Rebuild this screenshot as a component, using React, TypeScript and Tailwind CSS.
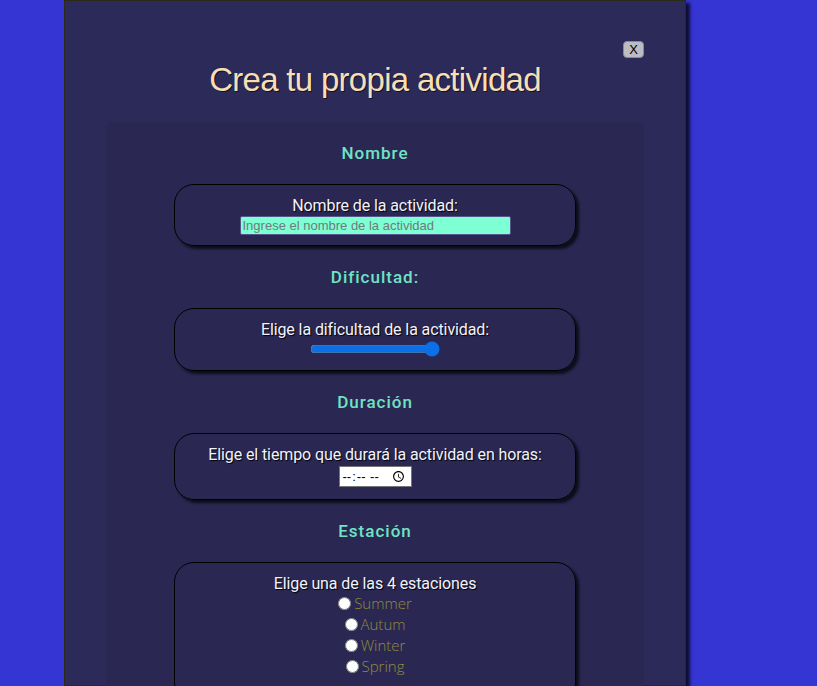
import React from "react";

export default function App() {
  const seasons = ["Summer", "Autum", "Winter", "Spring"];

  return (
    <div className="min-h-[686px] w-full bg-[#3535d3] overflow-hidden">
      <div className="relative ml-[64px] w-[622px] h-[686px] bg-[#2c2a58] border border-[#2b2918] shadow-[4px_3px_3px_rgba(0,0,0,0.75)]">
        {/* close */}
        <button className="absolute top-[40px] right-[41px] w-[21px] h-[17px] rounded-[4px] bg-[#bcbcc4] border border-[#8a8a94] text-[13px] leading-[15px] text-black font-['Liberation_Sans',sans-serif]">
          X
        </button>

        <h1 className="pt-[60px] text-center text-[33px] leading-[38px] tracking-[-0.7px] text-[#f7dfb5] font-['Liberation_Sans',sans-serif] [text-shadow:1px_1px_0_rgba(0,0,0,0.6)]">
          Crea tu propia actividad
        </h1>

        <div className="mx-[41px] mt-[23px] h-[600px] rounded-t-[6px] bg-[#2a2852] pt-[21px] flex flex-col items-center gap-[21px] font-['Roboto',sans-serif]">
          <h3 className="h-[20px] text-[17px] leading-[20px] font-medium tracking-[1px] text-[#6fe3c4]">
            Nombre
          </h3>
          <div className="w-[402px] h-[62px] rounded-[20px] border border-black shadow-[3px_3px_3px_rgba(0,0,0,0.7)] pt-[12px] flex flex-col items-center">
            <label className="text-[16px] leading-[18px] tracking-[-0.1px] text-[#f2f2ff] [text-shadow:1px_1px_1px_#000]">
              Nombre de la actividad:
            </label>
            <input
              type="text"
              placeholder="Ingrese el nombre de la actividad"
              className="mt-[1px] w-[271px] h-[19px] bg-[#7fffd4] border border-[#55558a] rounded-[2px] px-[2px] text-[13px] font-['Liberation_Sans',sans-serif] placeholder:text-[#6f7b78] outline-none"
            />
          </div>

          <h3 className="h-[20px] text-[17px] leading-[20px] font-medium tracking-[1px] text-[#6fe3c4]">
            Dificultad:
          </h3>
          <div className="w-[402px] h-[63px] rounded-[20px] border border-black shadow-[3px_3px_3px_rgba(0,0,0,0.7)] pt-[12px] flex flex-col items-center">
            <label className="text-[16px] leading-[18px] tracking-[-0.1px] text-[#f2f2ff] [text-shadow:1px_1px_1px_#000]">
              Elige la dificultad de la actividad:
            </label>
            <input type="range" min={1} max={5} defaultValue={5} className="mt-[2px] w-[130px] accent-[#0b6fe8]" />
          </div>

          <h3 className="h-[20px] text-[17px] leading-[20px] font-medium tracking-[1px] text-[#6fe3c4]">
            Duración
          </h3>
          <div className="w-[402px] h-[67px] rounded-[20px] border border-black shadow-[3px_3px_3px_rgba(0,0,0,0.7)] pt-[12px] flex flex-col items-center">
            <label className="text-[16px] leading-[18px] tracking-[-0.1px] text-[#f2f2ff] [text-shadow:1px_1px_1px_#000]">
              Elige el tiempo que durará la actividad en horas:
            </label>
            <input
              type="time"
              className="mt-[2px] w-[73px] h-[21px] bg-white text-black text-[13px] px-[2px] font-['Liberation_Sans',sans-serif] border border-[#767676]"
            />
          </div>

          <h3 className="h-[20px] text-[17px] leading-[20px] font-medium tracking-[1px] text-[#6fe3c4]">
            Estación
          </h3>
          <div className="w-[402px] h-[140px] rounded-[20px] border border-black shadow-[3px_3px_3px_rgba(0,0,0,0.7)] pt-[12px] flex flex-col items-center">
            <label className="text-[16px] leading-[18px] tracking-[-0.1px] text-[#f2f2ff] [text-shadow:1px_1px_1px_#000]">
              Elige una de las 4 estaciones
            </label>
            {seasons.map((s) => (
              <label key={s} className="flex items-center h-[21px] text-[15px] font-light text-[#928c3c] font-['Open_Sans',sans-serif]">
                <input type="radio" name="season" value={s} className="m-0 mr-[3px] w-[13px] h-[13px]" />
                {s}
              </label>
            ))}
          </div>
        </div>
      </div>
    </div>
  );
}
